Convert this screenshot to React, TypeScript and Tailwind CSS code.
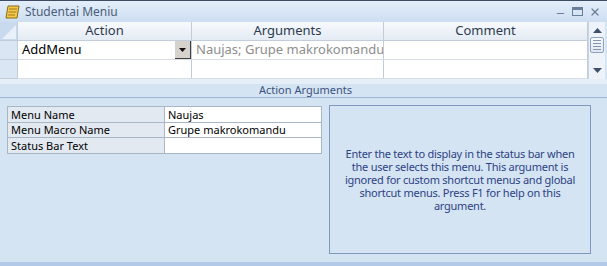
import { Minus, X } from "lucide-react";

const font = { fontFamily: '"Noto Sans", "Open Sans", sans-serif' };

function TitleBar() {
  return (
    <div className="flex h-[22px] shrink-0 items-center border-t border-[#3d4d63] bg-gradient-to-b from-[#e4eefa] to-[#cddef2] pl-[5px] pr-[6px]">
      <svg width="16" height="14" viewBox="0 0 16 14" className="shrink-0">
        <path d="M3 1h11l-2 12H1z" fill="#f2c94c" stroke="#8a6a10" strokeWidth="1" />
        <path d="M4 4h8M3.5 7h8M3 10h7" stroke="#a07818" strokeWidth="1" />
      </svg>
      <span className="ml-[4px] text-[12px] text-[#4b5d78]">Studentai Meniu</span>
      <div className="ml-auto flex items-center gap-[6px] text-[#6c7f99]">
        <Minus size={11} strokeWidth={2.5} className="mt-[4px]" />
        <div className="h-[9px] w-[11px] border border-t-[3px] border-[#6c7f99]" />
        <X size={12} strokeWidth={2.5} />
      </div>
    </div>
  );
}

function Scrollbar() {
  return (
    <div className="flex w-[17px] shrink-0 flex-col items-center bg-[#eef3f9] border-l border-[#c7d3e2]">
      <svg width="9" height="5" viewBox="0 0 9 5" className="mt-[6px]">
        <path d="M0 5L4.5 0L9 5z" fill="#3d4f6b" />
      </svg>
      <div className="mt-[4px] flex h-[16px] w-[14px] flex-col items-center justify-center gap-[2px] rounded-[2px] border border-[#8ea2bd] bg-gradient-to-b from-[#f7f9fc] to-[#dfe7f1]">
        <div className="h-px w-[8px] bg-[#8396b0]" />
        <div className="h-px w-[8px] bg-[#8396b0]" />
        <div className="h-px w-[8px] bg-[#8396b0]" />
        <div className="h-px w-[8px] bg-[#8396b0]" />
      </div>
      <svg width="9" height="5" viewBox="0 0 9 5" className="mt-[15px]">
        <path d="M0 0L4.5 5L9 0z" fill="#3d4f6b" />
      </svg>
    </div>
  );
}

function Grid() {
  const head = "flex items-center justify-center border-r border-[#c3cdd9] text-[13px] text-[#2c3a4e]";
  const cell = "border-r border-[#c3cdd9] border-b border-b-[#d9dee6]";
  return (
    <div className="flex h-[57px] shrink-0 pr-[2px]">
      <div className="flex flex-1 flex-col bg-white">
        <div className="flex h-[19px] bg-gradient-to-b from-[#f8fafd] to-[#e4ebf4] border-b border-[#c3cdd9]">
          <div className="relative w-[18px] shrink-0 border-r border-[#c3cdd9] bg-[#c9d9ee]">
            <svg width="14" height="14" viewBox="0 0 14 14" className="absolute right-[1px] bottom-[1px]">
              <path d="M14 0V14H0z" fill="#e8f0fa" />
            </svg>
          </div>
          <div className={`${head} w-[174px]`}>Action</div>
          <div className={`${head} w-[192px]`}>Arguments</div>
          <div className={`${head} flex-1`}>Comment</div>
        </div>
        <div className="flex h-[19px]">
          <div className="w-[18px] shrink-0 border-r border-b border-[#c3cdd9] bg-[#dbe6f4]" />
          <div className={`${cell} flex w-[174px] items-center pl-[4px] text-[13px] text-black`}>
            <span>AddMenu</span>
            <div className="ml-auto flex h-[18px] w-[16px] items-center justify-center border-r border-b border-[#404040] bg-[#d6d3cc]">
              <svg width="7" height="4" viewBox="0 0 7 4">
                <path d="M0 0h7L3.5 4z" fill="#111" />
              </svg>
            </div>
          </div>
          <div className={`${cell} flex w-[192px] items-center pl-[4px] text-[13px] text-[#8d8d8d] whitespace-nowrap overflow-hidden`}>
            Naujas; Grupe makrokomandu
          </div>
          <div className={`${cell} flex-1`} />
        </div>
        <div className="flex h-[19px]">
          <div className="w-[18px] shrink-0 border-r border-b border-[#c3cdd9] bg-[#dbe6f4]" />
          <div className={`${cell} w-[174px]`} />
          <div className={`${cell} w-[192px]`} />
          <div className={`${cell} flex-1`} />
        </div>
      </div>
      <Scrollbar />
    </div>
  );
}

function ArgTable() {
  const rows: [string, string][] = [
    ["Menu Name", "Naujas"],
    ["Menu Macro Name", "Grupe makrokomandu"],
    ["Status Bar Text", ""],
  ];
  return (
    <div className="mt-[8px] ml-[7px] w-[315px] self-start border border-[#a9b6c6] bg-[#a9b6c6]">
      {rows.map(([label, value], i) => (
        <div key={label} className={`flex h-[14.5px] ${i > 0 ? "mt-px" : ""}`}>
          <div className="flex w-[156px] items-center bg-[#e3e9f1] pl-[3px] text-[11px] leading-none text-black">
            {label}
          </div>
          <div className="ml-px flex flex-1 items-center bg-white pl-[3px] text-[11px] leading-none text-black">
            {value}
          </div>
        </div>
      ))}
    </div>
  );
}

export default function App() {
  const help = [
    "Enter the text to display in the status bar when",
    "the user selects this menu. This argument is",
    "ignored for custom shortcut menus and global",
    "shortcut menus. Press F1 for help on this",
    "argument.",
  ];
  return (
    <div style={font} className="flex h-[266px] w-[607px] flex-col overflow-hidden bg-[#d5e4f3]">
      <TitleBar />
      <Grid />
      <div className="h-[5px] shrink-0 bg-[#e6eef8]" />
      <div className="flex h-[14px] shrink-0 items-center justify-center border-b border-[#9db4d3] pl-[4px] text-[11px] text-[#3b5380]">
        Action Arguments
      </div>
      <div className="flex flex-1 gap-[7px] pr-[16px]">
        <ArgTable />
        <div className="mt-[7px] mb-[8px] flex flex-1 flex-col items-center justify-center border border-[#7f98bd] text-center text-[11px] leading-[13px] tracking-[-0.25px] text-[#2d4283]">
          {help.map((line) => (
            <span key={line} className="whitespace-nowrap">
              {line}
            </span>
          ))}
        </div>
      </div>
      <div className="h-[4px] shrink-0 bg-[#b2c9e8]" />
    </div>
  );
}
